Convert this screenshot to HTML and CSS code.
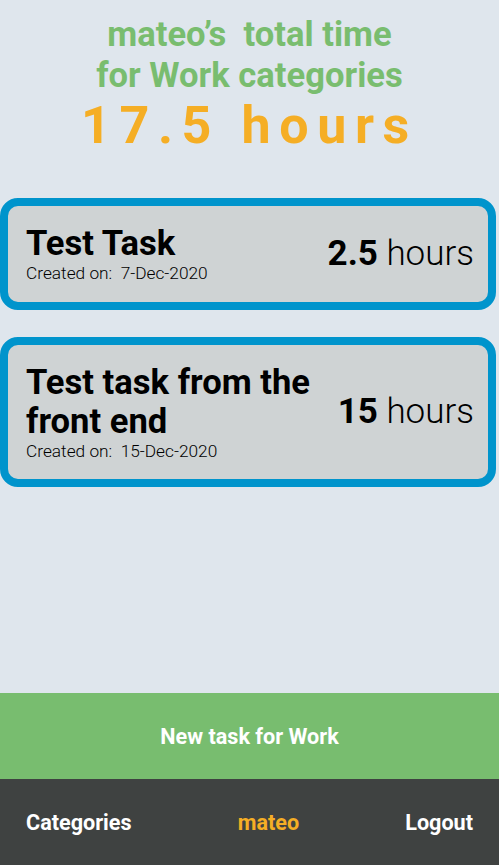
FILE: index.html
```html
<!DOCTYPE html>
<html>
<head>
<meta charset="utf-8">
<link rel="stylesheet" href="styles.css">
</head>
<body>
<div class="page">
  <header class="summary">
    <h1 class="summary-title">mateo’s&nbsp; total time<br>for Work categories</h1>
    <div class="summary-total">17.5 hours</div>
  </header>
  <main class="tasks">
    <div class="task-card">
      <div class="task-info">
        <h2 class="task-name">Test Task</h2>
        <div class="task-date">Created on:&nbsp; 7-Dec-2020</div>
      </div>
      <div class="task-hours"><b>2.5</b> hours</div>
    </div>
    <div class="task-card">
      <div class="task-info">
        <h2 class="task-name">Test task from the front end</h2>
        <div class="task-date">Created on:&nbsp; 15-Dec-2020</div>
      </div>
      <div class="task-hours"><b>15</b> hours</div>
    </div>
  </main>
  <div class="new-task">New task for Work</div>
  <nav class="footer-nav">
    <span class="nav-link">Categories</span>
    <span class="nav-user">mateo</span>
    <span class="nav-link">Logout</span>
  </nav>
</div>
</body>
</html>
```

FILE: styles.css
```css
* { box-sizing: border-box; }
html, body { margin: 0; padding: 0; }
body {
  font-family: Roboto, "Liberation Sans", sans-serif;
  background: #dfe6ed;
  color: #000;
}
.page {
  height: 865px;
  display: flex;
  flex-direction: column;
}
.summary {
  text-align: center;
  padding-top: 14px;
}
.summary-title {
  margin: 0;
  font-size: 34.6px;
  line-height: 41px;
  font-weight: 700;
  color: #79bd6f;
}
.summary-total {
  font-size: 52px;
  font-weight: 700;
  letter-spacing: 8.6px;
  line-height: 60px;
  color: #f5ae25;
}
.tasks {
  flex: 1;
  display: flex;
  flex-direction: column;
  gap: 27px;
  padding-top: 42px;
  padding-right: 3px;
}
.task-card {
  display: flex;
  align-items: center;
  justify-content: space-between;
  border: 8px solid #0094cc;
  border-radius: 18px;
  background: #cfd3d4;
  padding: 18px 14px 18.5px 18px;
}
.task-name {
  margin: 0;
  font-size: 34.6px;
  line-height: 39px;
  font-weight: 700;
}
.task-date {
  font-size: 17.3px;
  font-weight: 300;
}
.task-hours {
  font-size: 35px;
  font-weight: 300;
  white-space: nowrap;
  padding-left: 16px;
}
.task-hours b { font-weight: 700; }
.new-task {
  height: 86px;
  background: #78bd6f;
  color: #fff;
  font-size: 21.6px;
  font-weight: 700;
  display: flex;
  align-items: center;
  justify-content: center;
}
.footer-nav {
  height: 86px;
  background: #3f4241;
  display: flex;
  align-items: center;
  justify-content: space-between;
  padding: 0 26px;
  font-size: 21.6px;
  font-weight: 700;
  color: #fff;
}
.nav-user { color: #f5ae25; }
```
